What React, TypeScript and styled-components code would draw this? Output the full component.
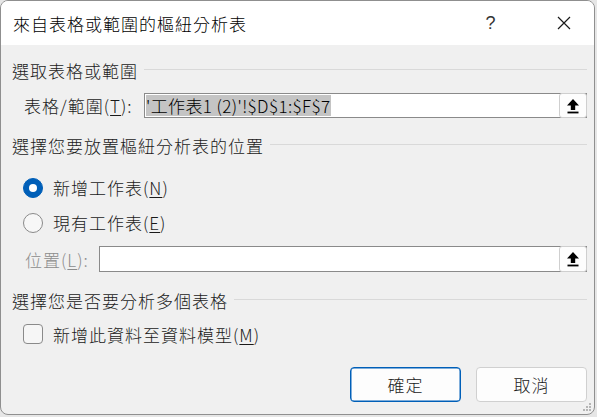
import React from 'react';
import styled, { createGlobalStyle } from 'styled-components';

const GlobalStyle = createGlobalStyle`
  html, body {
    margin: 0;
    padding: 0;
    background: #e6e6e6;
  }
  body {
    width: 597px;
    height: 417px;
    overflow: hidden;
    font-family: "Noto Sans CJK TC", "Noto Sans", sans-serif;
  }
`;

const Dialog = styled.div`
  position: relative;
  box-sizing: border-box;
  width: 595px;
  height: 415px;
  border: 1px solid #8f8f8f;
  border-radius: 8px;
  overflow: hidden;
  background: #f0f0f0;
  display: flex;
  flex-direction: column;
  color: #1a1a1a;
  font-size: 17px;
  font-weight: 300;
  letter-spacing: 1px;
`;

const TitleBar = styled.div`
  height: 44px;
  flex: none;
  display: flex;
  align-items: center;
  background: #ffffff;
  padding-left: 12px;
`;

const Title = styled.div`
  flex: 1;
  font-size: 17px;
  letter-spacing: 1px;
  color: #000;
`;

const HelpButton = styled.div`
  width: 46px;
  text-align: center;
  font-size: 18px;
  color: #333;
  font-family: "Liberation Sans", sans-serif;
`;

const CloseButton = styled.div`
  width: 60px;
  margin-left: 20px;
  display: flex;
  justify-content: center;
`;

const Body = styled.div`
  flex: 1;
  display: flex;
  flex-direction: column;
  padding: 0 7px 0 11px;
`;

const SectionHeader = styled.div<{ $top: number }>`
  display: flex;
  align-items: center;
  height: 22px;
  margin-top: ${(p) => p.$top}px;
  white-space: nowrap;
  &::after {
    content: '';
    flex: 1;
    height: 1px;
    background: #d9d9d9;
    margin-left: 6px;
    margin-top: -2px;
  }
`;

const FieldRow = styled.div<{ $top: number; $indent: number }>`
  display: flex;
  align-items: center;
  margin-top: ${(p) => p.$top}px;
  padding-left: ${(p) => p.$indent}px;
`;

const FieldLabel = styled.label<{ $disabled?: boolean; $width: number }>`
  width: ${(p) => p.$width}px;
  flex: none;
  white-space: nowrap;
  color: ${(p) => (p.$disabled ? '#8c8c8c' : '#1a1a1a')};
`;

const Mn = styled.span`
  text-decoration: underline;
  text-underline-offset: 2px;
`;

const InputBox = styled.div<{ $height: number }>`
  flex: 1;
  box-sizing: border-box;
  height: ${(p) => p.$height}px;
  border: 1px solid #8a8a8a;
  background: #ffffff;
  display: flex;
  align-items: center;
  justify-content: space-between;
  padding-left: 1px;
`;

const Selected = styled.span`
  background: #c4c4c4;
  color: #000;
  letter-spacing: 0.4px;
  line-height: 21px;
  padding-right: 1px;
`;

const PickButton = styled.div`
  box-sizing: border-box;
  width: 28px;
  height: calc(100% + 2px);
  margin-right: -1px;
  border: 1px solid #cfcfcf;
  border-radius: 3px;
  background: #fdfdfd;
  display: flex;
  align-items: center;
  justify-content: center;
`;

const OptionRow = styled.label<{ $top: number; $height: number }>`
  display: flex;
  align-items: center;
  height: ${(p) => p.$height}px;
  margin-top: ${(p) => p.$top}px;
  padding-left: 11px;
  gap: 10px;
`;

const OptionText = styled.span`
  white-space: nowrap;
`;

const Radio = styled.span<{ $checked?: boolean }>`
  box-sizing: border-box;
  width: 20px;
  height: 20px;
  border-radius: 50%;
  flex: none;
  display: flex;
  align-items: center;
  justify-content: center;
  background: ${(p) => (p.$checked ? '#005fb8' : '#f7f7f7')};
  border: 1px solid ${(p) => (p.$checked ? '#005fb8' : '#8a8a8a')};
  &::after {
    content: '';
    display: ${(p) => (p.$checked ? 'block' : 'none')};
    width: 8px;
    height: 8px;
    border-radius: 50%;
    background: #ffffff;
  }
`;

const Checkbox = styled.span`
  box-sizing: border-box;
  width: 20px;
  height: 20px;
  flex: none;
  border-radius: 4px;
  border: 1px solid #8a8a8a;
  background: #f6f6f6;
`;

const ButtonBar = styled.div`
  display: flex;
  justify-content: flex-end;
  gap: 15px;
  margin-top: 21px;
`;

const DialogButton = styled.div<{ $primary?: boolean }>`
  box-sizing: border-box;
  width: 111px;
  height: 35px;
  display: flex;
  align-items: center;
  justify-content: center;
  background: #fdfdfd;
  border-radius: 4px;
  border: 1px solid ${(p) => (p.$primary ? '#005fb8' : '#d0d0d0')};
  box-shadow: ${(p) => (p.$primary ? 'inset 0 0 0 0.5px #005fb8' : 'none')};
  letter-spacing: 1px;
`;

const Grip = styled.svg`
  position: absolute;
  right: 2px;
  bottom: 2px;
`;

const UpArrow = () => (
  <svg width="14" height="16" viewBox="0 0 14 16">
    <path d="M7 1 L1 7.5 H4.8 V12 H9.2 V7.5 H13 Z" fill="#000" />
    <rect x="1.5" y="13.6" width="11" height="1.8" fill="#000" />
  </svg>
);

const CloseIcon = () => (
  <svg width="14" height="14" viewBox="0 0 14 14">
    <path d="M1 1 L13 13 M13 1 L1 13" stroke="#1a1a1a" strokeWidth="1.2" />
  </svg>
);

export default function App() {
  return (
    <>
      <GlobalStyle />
      <Dialog>
        <TitleBar>
          <Title>來自表格或範圍的樞紐分析表</Title>
          <HelpButton>?</HelpButton>
          <CloseButton>
            <CloseIcon />
          </CloseButton>
        </TitleBar>
        <Body>
          <SectionHeader $top={14}>選取表格或範圍</SectionHeader>
          <FieldRow $top={12} $indent={12}>
            <FieldLabel $width={120}>
              表格/範圍(<Mn>T</Mn>):
            </FieldLabel>
            <InputBox $height={25}>
              <Selected>'工作表1 (2)'!$D$1:$F$7</Selected>
              <PickButton>
                <UpArrow />
              </PickButton>
            </InputBox>
          </FieldRow>

          <SectionHeader $top={16}>選擇您要放置樞紐分析表的位置</SectionHeader>
          <OptionRow $top={14} $height={35}>
            <Radio $checked />
            <OptionText>
              新增工作表(<Mn>N</Mn>)
            </OptionText>
          </OptionRow>
          <OptionRow $top={0} $height={35}>
            <Radio />
            <OptionText>
              現有工作表(<Mn>E</Mn>)
            </OptionText>
          </OptionRow>
          <FieldRow $top={6} $indent={13}>
            <FieldLabel $width={74} $disabled>
              位置(<Mn>L</Mn>):
            </FieldLabel>
            <InputBox $height={26}>
              <span />
              <PickButton>
                <UpArrow />
              </PickButton>
            </InputBox>
          </FieldRow>

          <SectionHeader $top={17}>選擇您是否要分析多個表格</SectionHeader>
          <OptionRow $top={11} $height={24}>
            <Checkbox />
            <OptionText>
              新增此資料至資料模型(<Mn>M</Mn>)
            </OptionText>
          </OptionRow>

          <ButtonBar>
            <DialogButton $primary>確定</DialogButton>
            <DialogButton>取消</DialogButton>
          </ButtonBar>
        </Body>
        <Grip width="10" height="10" viewBox="0 0 10 10">
          <rect x="7" y="1" width="2" height="2" fill="#b5b5b5" />
          <rect x="4" y="4" width="2" height="2" fill="#b5b5b5" />
          <rect x="7" y="4" width="2" height="2" fill="#b5b5b5" />
          <rect x="1" y="7" width="2" height="2" fill="#b5b5b5" />
          <rect x="4" y="7" width="2" height="2" fill="#b5b5b5" />
          <rect x="7" y="7" width="2" height="2" fill="#b5b5b5" />
        </Grip>
      </Dialog>
    </>
  );
}
